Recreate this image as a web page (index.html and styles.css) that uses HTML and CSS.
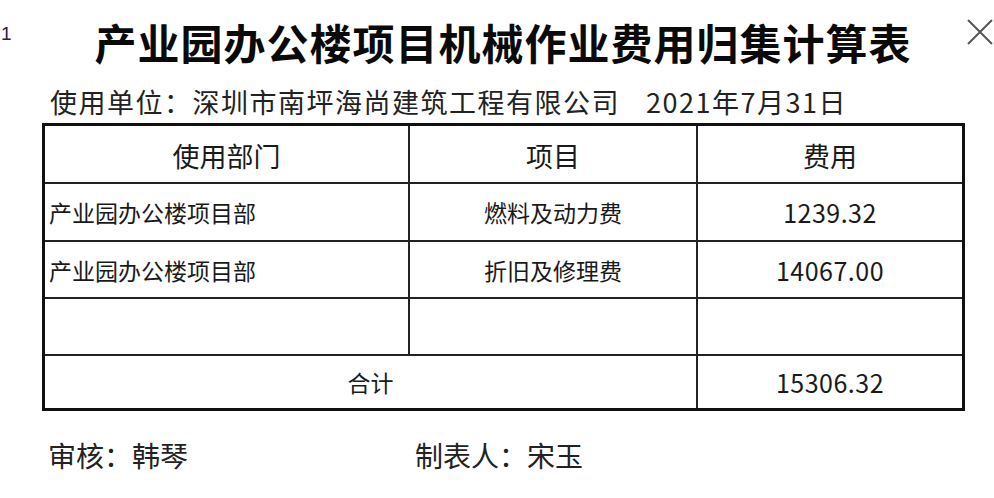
FILE: index.html
```html
<!DOCTYPE html>
<html lang="zh">
<head>
<meta charset="utf-8">
<link rel="stylesheet" href="styles.css">
</head>
<body>
<div class="page">
  <span class="sheet-no">1</span>
  <svg class="close" viewBox="0 0 28 28" width="28" height="28"><path d="M2 2 L26 26 M26 2 L2 26" stroke="#555" stroke-width="2" fill="none"/></svg>
  <h1 class="title">产业园办公楼项目机械作业费用归集计算表</h1>
  <div class="unit"><span>使用单位：深圳市南坪海尚建筑工程有限公司</span><span class="date">2021年7月31日</span></div>
  <div class="table">
    <div class="cell head">使用部门</div>
    <div class="cell head">项目</div>
    <div class="cell head last">费用</div>

    <div class="cell left">产业园办公楼项目部</div>
    <div class="cell">燃料及动力费</div>
    <div class="cell num last">1239.32</div>

    <div class="cell left">产业园办公楼项目部</div>
    <div class="cell">折旧及修理费</div>
    <div class="cell num last">14067.00</div>

    <div class="cell"></div>
    <div class="cell"></div>
    <div class="cell last"></div>

    <div class="cell span2 bottom">合计</div>
    <div class="cell num last bottom">15306.32</div>
  </div>
  <div class="footer">
    <span class="sign">审核：韩琴</span>
    <span class="sign">制表人：宋玉</span>
  </div>
</div>
</body>
</html>
```

FILE: styles.css
```css
html, body {
  margin: 0;
  padding: 0;
  background: #fff;
}
.page {
  position: relative;
  width: 994px;
  height: 498px;
  box-sizing: border-box;
  padding-top: 14px;
  font-family: "Noto Sans CJK SC", "Noto Sans", sans-serif;
  color: #111;
  overflow: hidden;
}
.sheet-no {
  position: absolute;
  left: 1px;
  top: 23px;
  font-family: "Liberation Sans", Arial, sans-serif;
  font-size: 19px;
  line-height: 22px;
  color: #2a2040;
}
.close {
  position: absolute;
  right: 0;
  top: 18px;
}
.title {
  margin: 0;
  padding-left: 12px;
  text-align: center;
  font-size: 42px;
  line-height: 56px;
  font-weight: 700;
  letter-spacing: 1px;
  color: #0a0a0a;
}
.unit {
  display: flex;
  gap: 26px;
  margin-top: 15px;
  padding-left: 50px;
  font-size: 27px;
  line-height: 34px;
  letter-spacing: 1.5px;
  color: #222;
}
.table {
  display: grid;
  grid-template-columns: 365px 288px 1fr;
  grid-template-rows: 58px 58px 57px 57px 52px;
  width: 923px;
  box-sizing: border-box;
  margin: 4px 0 0 42px;
  border: 3px solid #111;
}
.cell {
  display: flex;
  align-items: center;
  justify-content: center;
  box-sizing: border-box;
  border-right: 2px solid #222;
  border-bottom: 2px solid #222;
  font-size: 23px;
  color: #1a1a1a;
}
.cell.head {
  font-size: 27px;
  padding-top: 2px;
}
.cell.num {
  font-size: 25px;
  letter-spacing: 0.5px;
}
.cell.left {
  justify-content: flex-start;
  padding-left: 4px;
}
.cell.last {
  border-right: none;
}
.cell.bottom {
  border-bottom: none;
}
.cell.span2 {
  grid-column: span 2;
}
.footer {
  display: flex;
  margin-top: 26px;
  padding-left: 48px;
  font-size: 28px;
  line-height: 36px;
  color: #222;
}
.sign:first-child {
  width: 367px;
}
```
